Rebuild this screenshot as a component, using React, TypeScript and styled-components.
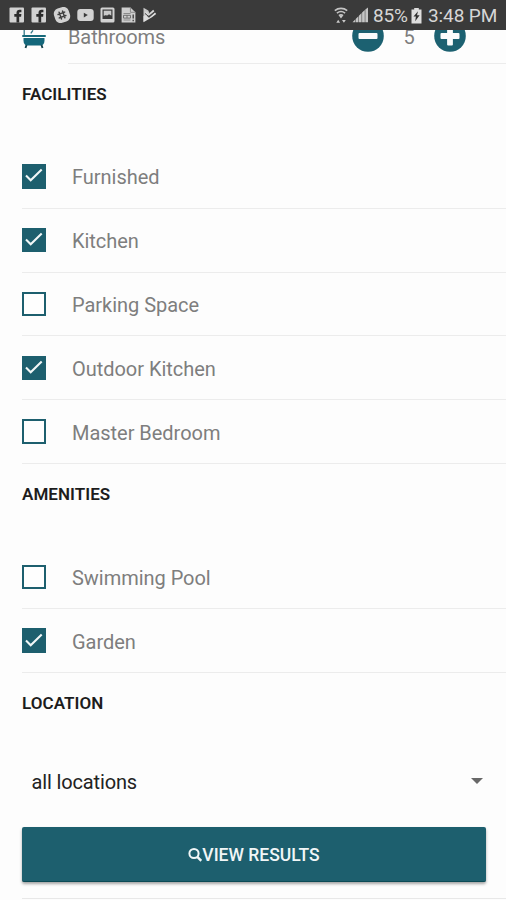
import React from "react";
import styled, { createGlobalStyle } from "styled-components";

const teal = "#1d5f6e";

const GlobalStyle = createGlobalStyle`
  *, *::before, *::after { box-sizing: border-box; }
  body { margin: 0; background: #fdfdfd; font-family: Roboto, "Liberation Sans", sans-serif; overflow: hidden; }
`;

const Screen = styled.div`
  height: 900px;
  overflow: hidden;
  display: flex;
  flex-direction: column;
  background: #fdfdfd;
`;

const StatusBar = styled.header`
  position: relative;
  z-index: 1;
  flex: none;
  height: 30px;
  padding: 0 9px;
  display: flex;
  justify-content: space-between;
  align-items: center;
  background: #3a3a3a;
  color: #d6d6d6;
`;

const StatusIcons = styled.div`
  display: flex;
  gap: 6px;
  svg { display: block; }
`;

const StatusInfo = styled.div`
  display: flex;
  align-items: center;
  font-size: 19px;
  line-height: 30px;
  svg { display: block; }
`;

const Reception = styled.div`
  display: flex;
  align-items: center;
  gap: 4px;
`;

const Percent = styled.span`
  margin-left: 4px;
  padding-top: 2px;
  width: 38px;
  letter-spacing: -0.2px;
`;

const Clock = styled.span`
  margin-left: 6px;
  padding-top: 2px;
  width: 69px;
  white-space: nowrap;
  letter-spacing: -0.1px;
`;

const CounterRow = styled.div`
  flex: none;
  height: 33.6px;
  padding-left: 22px;
  display: flex;
`;

const CounterBody = styled.div`
  flex: 1;
  margin-left: 22px;
  padding-right: 40px;
  display: flex;
  border-bottom: 1px solid #ececec;
`;

const CounterLabel = styled.span`
  flex: 1;
  margin-top: -5px;
  font-size: 20px;
  line-height: 24px;
  letter-spacing: -0.1px;
  color: #7e7e7e;
`;

const Stepper = styled.div`
  width: 114px;
  margin-top: -10px;
  display: flex;
  justify-content: space-between;
  svg { display: block; }
`;

const Count = styled.span`
  margin-top: 5px;
  font-size: 20px;
  line-height: 24px;
  color: #7e7e7e;
`;

const SectionTitle = styled.h2`
  flex: none;
  margin: 0;
  height: 81.4px;
  padding: 20px 0 0 22px;
  font-size: 17px;
  line-height: 20px;
  font-weight: 600;
  letter-spacing: 0.05px;
  color: #1c1c1c;
`;

const OptionRow = styled.label`
  flex: none;
  height: 63.8px;
  margin-left: 22px;
  display: flex;
  align-items: center;
  gap: 25.6px;
  border-bottom: 1px solid #ececec;
`;

const Box = styled.span<{ $checked: boolean }>`
  width: 24.4px;
  height: 24.4px;
  border: 2px solid ${teal};
  background: ${(p) => (p.$checked ? teal : "#fefefe")};
  display: flex;
  align-items: center;
  justify-content: center;
`;

const OptionLabel = styled.span`
  padding-top: 2px;
  font-size: 20px;
  line-height: 24px;
  letter-spacing: -0.03px;
  color: #7e7e7e;
`;

const Select = styled.div`
  flex: none;
  height: 72.2px;
  padding: 16px 23px 0 31.6px;
  display: flex;
  justify-content: space-between;
  font-size: 20px;
  line-height: 24px;
  letter-spacing: -0.15px;
  color: #222;
  svg { margin-top: 8px; }
`;

const Submit = styled.button`
  flex: none;
  height: 55px;
  margin: 0 20px 0 22px;
  padding: 3px 0 0;
  border: 0;
  border-bottom: 1px solid #0c4b56;
  border-radius: 2px;
  background: ${teal};
  box-shadow: 0 2px 3px rgba(0, 0, 0, 0.35);
  display: flex;
  align-items: center;
  justify-content: center;
  font: 500 17.5px/20px Roboto, sans-serif;
  color: #f1f6f7;
`;

const EndLine = styled.div`
  flex: none;
  height: 1px;
  margin: 16px 0 0 22px;
  background: #e8e8e8;
`;

const Facebook = () => (
  <svg width="16" height="16" viewBox="0 0 16 16">
    <rect x="0.5" y="0.5" width="14.5" height="15" rx="1" fill="#d2d2d2" />
    <path d="M7.500 15.500V9.800H5.300V7.100h2.200V5.700c0-2 1.200-3 2.900-3h2v2.500h-1.300c-.7 0-.9.400-.9 1v.9h2.200l-.3 2.700h-1.900v5.700z" fill="#2c2c2c" />
  </svg>
);

const Slack = () => (
  <svg width="18" height="16" viewBox="0 0 18 16">
    <rect x="1.3" y="0.5" width="15.4" height="15" rx="5.5" fill="#d2d2d2" transform="rotate(-18 9 8)" />
    <g fill="none" stroke="#3f3f3f" strokeWidth="1.5" strokeLinecap="round" transform="rotate(-20 9 8)">
      <path d="M7.200 4.500v7M10.800 4.500v7M5.500 6.200h7M5.500 9.800h7" />
    </g>
  </svg>
);

const Youtube = () => (
  <svg width="17" height="16" viewBox="0 0 17 16">
    <rect x="0.3" y="2" width="16.4" height="12" rx="3" fill="#d2d2d2" />
    <path d="M6.800 5.800l4 2.300-4 2.300z" fill="#3a3a3a" />
  </svg>
);

const Picture = () => (
  <svg width="15" height="16" viewBox="0 0 15 16">
    <rect x="0.5" y="0.5" width="14" height="15" rx="1.5" fill="#d2d2d2" />
    <rect x="2.5" y="2.5" width="10" height="9.5" fill="#3a3a3a" />
    <rect x="3.7" y="3.7" width="7.6" height="5" fill="#c9c9c9" />
    <path d="M3.700 9.200l2-1 1.400.5 1.900-1.500 2.300 1.500v1.500H3.700z" fill="#3a3a3a" />
  </svg>
);

const Document = () => (
  <svg width="15" height="16" viewBox="0 0 15 16">
    <path d="M.6.500h8.800l5 4.800v10.200H.6z" fill="#cecece" />
    <path d="M9.400.500v4.800h5M2.500 6.500h7M2.500 13h7" fill="none" stroke="#8a8a8a" strokeWidth="1" />
    <path d="M2.500 8.300h7v2.800h-7zM6 8v3" fill="none" stroke="#707070" strokeWidth="1" />
    <path d="M12.200 7.500v4M12.200 12.800v1.400" stroke="#3a3a3a" strokeWidth="1.3" />
  </svg>
);

const PlayCheck = () => (
  <svg width="15" height="16" viewBox="0 0 15 16">
    <path d="M1.500.800l4.800 2.800 1 2.200L1.500 15z" fill="#c8c8c8" />
    <path d="M1.500 15.200V9l2.500-1 3 2.700 6-5.200 1.200 1.500-4.200 3.300z" fill="#dedede" />
    <path d="M3.500 4.800l3.300 3.100 5-4.400" fill="none" stroke="#d8d8d8" strokeWidth="1.8" />
    <path d="M3 6.400l3.900 3.300 5.500-4.800" fill="none" stroke="#4b4b4b" strokeWidth="1" />
  </svg>
);

const Wifi = () => (
  <svg width="14" height="17" viewBox="0 0 14 17">
    <path d="M.8 3.600c3.600-2.900 8.800-2.900 12.400 0M2.900 6.200c2.400-2 5.800-2 8.200 0M4.900 8.700c1.300-1 2.900-1 4.200 0" fill="none" stroke="#c4c4c4" strokeWidth="1.6" />
    <path d="M5.100 8.700h3.800L7 11.500zM2.300 15.700h3.800l-1.900-2.900zM8 12.900h3.800l-1.900 2.900z" fill="#c9c9c9" />
  </svg>
);

const Signal = () => (
  <svg width="17" height="16" viewBox="0 0 17 16">
    <path d="M.500 15.200h2.700v-2.700zM3.700 15.200h2.700V9.300L3.700 12zM6.900 15.200h2.700V6.100L6.900 8.800zM10.100 15.200h2.700V3.100l-2.700 2.500zM13.300 15.200h2.700V.400l-2.700 2.200z" fill="#c4c4c4" />
  </svg>
);

const Battery = () => (
  <svg width="11" height="17" viewBox="0 0 11 17">
    <path d="M3.200 1h4.600v1.500h2.700v13.900H.500V2.500h2.700z" fill="#dedede" />
    <path d="M7 4.200L2.500 9.600h2.400l-.7 4.600 4.400-6H6z" fill="#303030" />
  </svg>
);

const Bathtub = () => (
  <svg width="24" height="22" viewBox="0 0 24 22">
    <path d="M2.200 7V0M8.800 3.300L11 .3" stroke="#367989" strokeWidth="1.3" fill="none" />
    <rect x="0" y="5" width="24" height="2" rx="1" fill="#17697a" />
    <path d="M1.500 8h21v2.500c0 2.800-1.300 5-3.500 5H5c-2.200 0-3.500-2.200-3.500-5z" fill="#14677b" />
    <path d="M4.500 15l-1 3M19.500 15l1 3" stroke="#15434d" strokeWidth="1.9" />
  </svg>
);

const RoundButton = ({ plus = false }: { plus?: boolean }) => (
  <svg width="32" height="32" viewBox="0 0 32 32">
    <circle cx="16" cy="16" r="15.8" fill="#1c6171" />
    <rect x="6.500" y="13.1" width="19" height="5.8" rx="1" fill="#fafcfc" />
    {plus && <rect x="13.1" y="6.5" width="5.8" height="19" rx="1" fill="#fafcfc" />}
  </svg>
);

const Check = () => (
  <svg width="20" height="16" viewBox="0 0 20 16">
    <path d="M2 7.600l4.700 4.600L17.700 1.600" fill="none" stroke="#f2f7f7" strokeWidth="2.1" />
  </svg>
);

const SearchIcon = () => (
  <svg width="14" height="16" viewBox="0 0 14 16">
    <circle cx="6" cy="6.5" r="4.6" fill="none" stroke="#f1f6f7" strokeWidth="2" />
    <path d="M9.300 9.800l4 4" stroke="#f1f6f7" strokeWidth="2.4" />
  </svg>
);

const Caret = () => (
  <svg width="12" height="6" viewBox="0 0 12 6">
    <path d="M0 0h12L6 6z" fill="#686868" />
  </svg>
);

const Option = ({ label, checked = false }: { label: string; checked?: boolean }) => (
  <OptionRow>
    <Box $checked={checked}>{checked && <Check />}</Box>
    <OptionLabel>{label}</OptionLabel>
  </OptionRow>
);

export default function App() {
  return (
    <>
      <GlobalStyle />
      <Screen>
        <StatusBar>
          <StatusIcons>
            <Facebook />
            <Facebook />
            <Slack />
            <Youtube />
            <Picture />
            <Document />
            <PlayCheck />
          </StatusIcons>
          <StatusInfo>
            <Reception>
              <Wifi />
              <Signal />
            </Reception>
            <Percent>85%</Percent>
            <Battery />
            <Clock>3:48 PM</Clock>
          </StatusInfo>
        </StatusBar>
        <CounterRow>
          <Bathtub />
          <CounterBody>
            <CounterLabel>Bathrooms</CounterLabel>
            <Stepper>
              <RoundButton />
              <Count>5</Count>
              <RoundButton plus />
            </Stepper>
          </CounterBody>
        </CounterRow>
        <SectionTitle>FACILITIES</SectionTitle>
        <Option label="Furnished" checked />
        <Option label="Kitchen" checked />
        <Option label="Parking Space" />
        <Option label="Outdoor Kitchen" checked />
        <Option label="Master Bedroom" />
        <SectionTitle>AMENITIES</SectionTitle>
        <Option label="Swimming Pool" />
        <Option label="Garden" checked />
        <SectionTitle>LOCATION</SectionTitle>
        <Select>
          all locations
          <Caret />
        </Select>
        <Submit>
          <SearchIcon />
          VIEW RESULTS
        </Submit>
        <EndLine />
      </Screen>
    </>
  );
}
